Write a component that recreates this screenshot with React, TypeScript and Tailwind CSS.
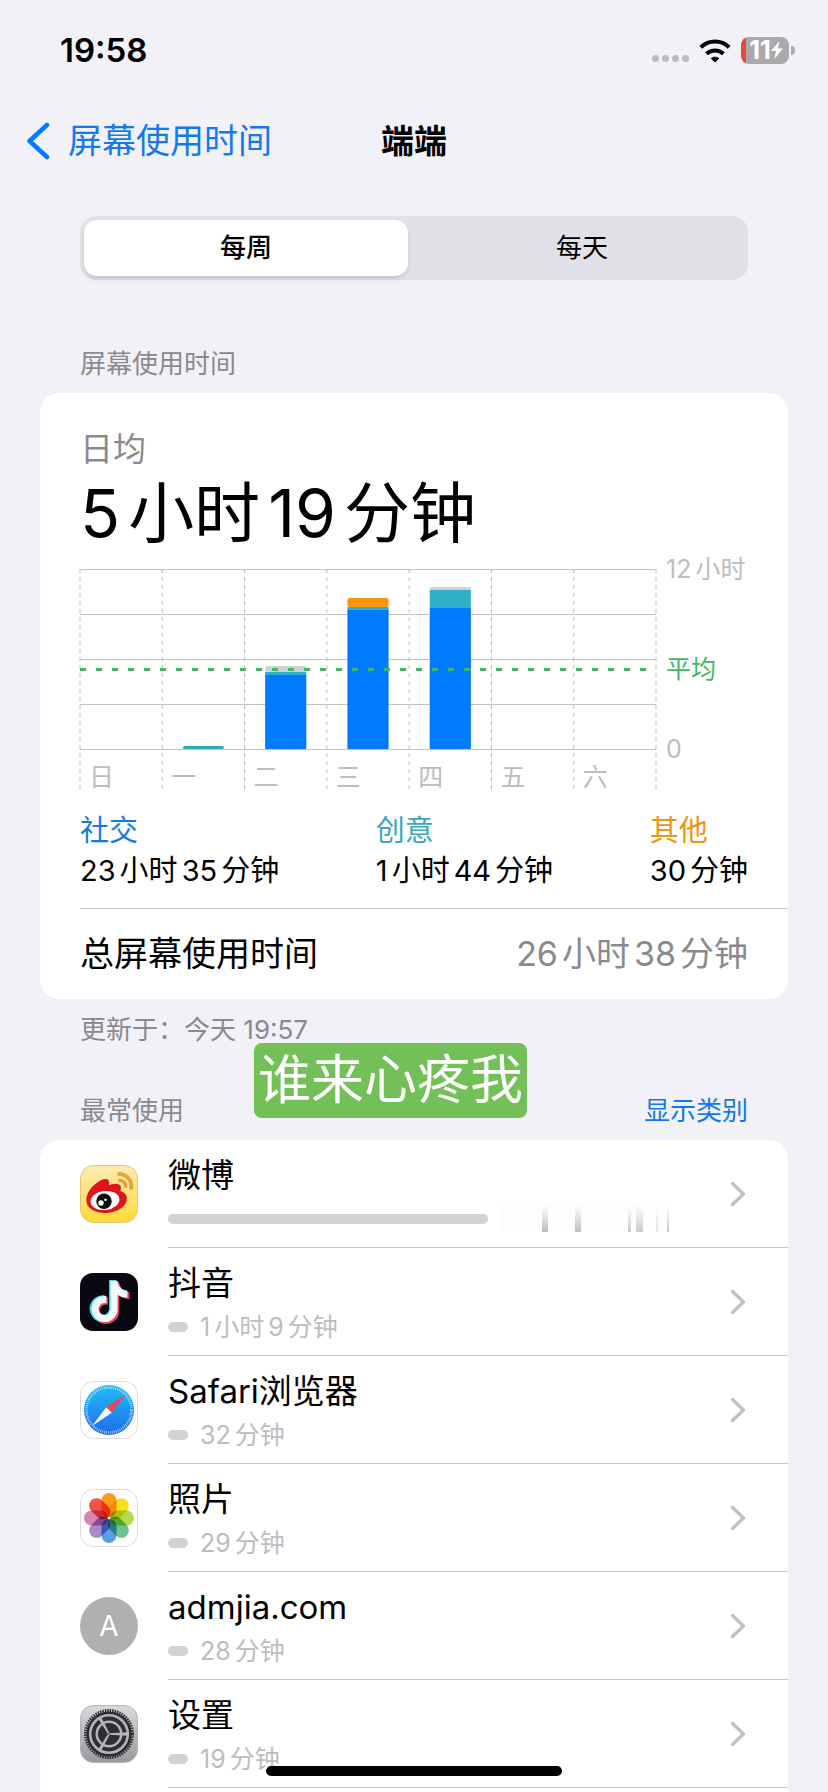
import React, { useState } from 'react'
import { FaTiktok } from 'react-icons/fa'

const days = ['日', '一', '二', '三', '四', '五', '六']

// heights in px on a 180px plot (12 hours), listed from the bottom up
const bars = [
  { day: 1, parts: [{ h: 3, color: '#30a9bb' }] },
  { day: 2, parts: [{ h: 74, color: '#007aff' }, { h: 3, color: '#30b0c7' }, { h: 6, color: '#d1d1d6' }] },
  { day: 3, parts: [{ h: 139, color: '#007aff' }, { h: 3, color: '#30b0c7' }, { h: 9, color: '#ff9500' }] },
  { day: 4, parts: [{ h: 141, color: '#007aff' }, { h: 18, color: '#30b0c7' }, { h: 3, color: '#d1d1d6' }] },
]

const petals = ['#fb9a1c', '#f7e01c', '#b5d84c', '#6cc496', '#5a9fe0', '#a58bc8', '#d887b5', '#f0524f']

type DurationProps = { hours?: number; minutes: number; gap: string }

const Duration = ({ hours, minutes, gap }: DurationProps) => {
  return (
    <span className={`inline-flex whitespace-nowrap ${gap}`}>
      {hours !== undefined && (
        <>
          <span>{hours}</span>
          <span>小时</span>
        </>
      )}
      <span>{minutes}</span>
      <span>分钟</span>
    </span>
  )
}

const WeiboIcon = () => (
  <svg viewBox="0 0 58 58" className="size-[58px]">
    <defs>
      <linearGradient id="weibo" x1="0" y1="0" x2="0" y2="1">
        <stop offset="0" stopColor="#fdebb4" />
        <stop offset="1" stopColor="#ffd83a" />
      </linearGradient>
    </defs>
    <rect x=".5" y=".5" width="57" height="57" rx="13" fill="url(#weibo)" stroke="#e0c878" />
    <path
      d="M6.5 37C5.500 30 10 23 16 18.500C20 15.500 24.500 13 27.500 14.500C29.500 15.500 29.500 18 28.800 20.300C32 18.800 37 17.600 39.800 20C41.500 21.600 41 24 40.200 26C44 27 47 29.500 46.800 34C46.500 42 36 48 25 48C16 48 7.500 44 6.500 37Z"
      fill="#e0131b"
    />
    <ellipse cx="25" cy="35.500" rx="14.500" ry="9.500" fill="#fff" transform="rotate(-7 25 35.500)" />
    <circle cx="24" cy="36.300" r="7.700" fill="#0a0a0a" />
    <circle cx="21" cy="38" r="2.700" fill="#fff" />
    <circle cx="25.500" cy="34.800" r="1.300" fill="#fff" />
    <path d="M37.500 9C46.500 8.500 53 15.500 51 24.500" fill="none" stroke="#e2a63a" strokeWidth="3.800" />
    <path d="M38.300 15.500C43 15 46.500 18 45.300 23" fill="none" stroke="#e2a63a" strokeWidth="3.400" />
  </svg>
)

const DouyinIcon = () => (
  <svg viewBox="0 0 58 58" className="size-[58px]">
    <rect width="58" height="58" rx="13" fill="#0a0913" />
    <FaTiktok x={10} y={9} size={42} color="#e8455f" />
    <FaTiktok x={7} y={7} size={42} color="#3fe3e0" />
    <FaTiktok x={9} y={8} size={41} color="#f4f6fb" />
  </svg>
)

const SafariIcon = () => (
  <svg viewBox="0 0 58 58" className="size-[58px]">
    <defs>
      <linearGradient id="safari" x1="0" y1="0" x2="0" y2="1">
        <stop offset="0" stopColor="#22bdf7" />
        <stop offset="1" stopColor="#1d6bea" />
      </linearGradient>
    </defs>
    <rect x=".5" y=".5" width="57" height="57" rx="13" fill="#fff" stroke="#dcdcdc" />
    <circle cx="29" cy="29" r="25" fill="url(#safari)" />
    <circle cx="29" cy="29" r="22.500" fill="none" stroke="#fff" strokeOpacity=".8" strokeWidth="2.600" strokeDasharray=".7 1.263" />
    <path d="M45.500 13.500L26.200 26.200L31.800 31.800Z" fill="#e5484d" />
    <path d="M12 45L26.200 26.200L31.800 31.800Z" fill="#f7f9fc" />
  </svg>
)

const PhotosIcon = () => (
  <svg viewBox="0 0 58 58" className="size-[58px] isolate">
    <rect x=".5" y=".5" width="57" height="57" rx="13" fill="#fff" stroke="#dcdcdc" />
    {petals.map((color, i) => (
      <rect
        key={color}
        x="21.500"
        y="4"
        width="15"
        height="24"
        rx="7.500"
        fill={color}
        transform={`rotate(${i * 45} 29 29)`}
        className="mix-blend-multiply"
      />
    ))}
  </svg>
)

const SettingsIcon = () => (
  <svg viewBox="0 0 58 58" className="size-[58px]">
    <defs>
      <linearGradient id="settings" x1="0" y1="0" x2="0" y2="1">
        <stop offset="0" stopColor="#d9d9de" />
        <stop offset="1" stopColor="#98989d" />
      </linearGradient>
    </defs>
    <rect x=".5" y=".5" width="57" height="57" rx="13" fill="url(#settings)" stroke="#b4b4b8" />
    <circle cx="29" cy="29" r="23.500" fill="none" stroke="#2c2c30" strokeWidth="3" strokeDasharray="1.500 .96" />
    <circle cx="29" cy="29" r="21.300" fill="#b4b4b9" stroke="#2c2c30" strokeWidth="2.400" />
    <circle cx="29" cy="29" r="15.500" fill="none" stroke="#2f2f33" strokeWidth="4" />
    <circle cx="29" cy="29" r="11" fill="#2f2f33" />
    {[0, 120, 240].map((deg) => (
      <path key={deg} d="M29 28.200L47.500 27.300V30.700L29 29.800Z" fill="#b4b4b9" transform={`rotate(${deg} 29 29)`} />
    ))}
    <circle cx="29" cy="29" r="1.600" fill="#77777c" />
  </svg>
)

const LetterIcon = () => (
  <span className="flex size-[58px] items-center justify-center rounded-full bg-[#b0b0b0] text-[28px] leading-none text-white">
    A
  </span>
)

// smeared-out usage value next to the first bar
const Smudge = () => (
  <svg viewBox="0 0 170 26" className="h-[26px] w-[170px]" aria-hidden="true">
    <defs>
      <linearGradient id="smudge" x1="0" y1="0" x2="0" y2="1">
        <stop offset="0" stopColor="#c4c4c6" stopOpacity="0" />
        <stop offset="1" stopColor="#bdbdbf" />
      </linearGradient>
    </defs>
    <rect width="170" height="26" fill="#fdfdfd" />
    <rect x="42" width="6" height="26" fill="url(#smudge)" />
    <rect x="75" width="6" height="26" fill="url(#smudge)" />
    <rect x="128" width="3" height="26" fill="url(#smudge)" opacity=".8" />
    <rect x="136" width="7" height="26" fill="url(#smudge)" opacity=".8" />
    <rect x="156" width="2" height="26" fill="url(#smudge)" opacity=".4" />
    <rect x="167" width="2" height="26" fill="url(#smudge)" opacity=".8" />
  </svg>
)

const apps = [
  { name: '微博', icon: <WeiboIcon /> },
  { name: '抖音', icon: <DouyinIcon />, hours: 1, minutes: 9 },
  { name: 'Safari浏览器', icon: <SafariIcon />, minutes: 32 },
  { name: '照片', icon: <PhotosIcon />, minutes: 29 },
  { name: 'admjia.com', icon: <LetterIcon />, minutes: 28 },
  { name: '设置', icon: <SettingsIcon />, minutes: 19 },
]

const StatusBar = () => {
  return (
    <div className="flex h-[100px] items-center justify-between pr-[33px] pl-[60px]">
      <span className="text-[33px] leading-10 font-semibold">19:58</span>
      <div className="flex items-center gap-[10px]">
        <div className="mt-4 flex gap-[3px]">
          {[0, 1, 2, 3].map((i) => (
            <span key={i} className="size-[7px] rounded-full bg-[#bcbcc0]" />
          ))}
        </div>
        <svg viewBox="0 0 32 25" className="h-[25px] w-8">
          <path d="M16 24.500L11.700 20.200C14 18.100 18 18.100 20.300 20.200Z" />
          <path d="M7.500 15.700C12.300 11.300 19.700 11.300 24.500 15.700" fill="none" stroke="#000" strokeWidth="4" />
          <path d="M1.800 9.300C9.800 1.500 22.200 1.500 30.200 9.300" fill="none" stroke="#000" strokeWidth="4" />
        </svg>
        <div className="flex items-center gap-[2px]">
          <div className="flex h-[27px] w-12 items-center justify-center rounded-lg bg-linear-to-r from-[#e5483f] from-11% to-[#a9a9ae] to-11% text-[25px] leading-[27px] font-bold text-white">
            <span className="pl-[2px]">11</span>
            <svg viewBox="0 0 12 18" className="h-[18px] w-3 fill-white">
              <path d="M8.500 0L0 10H5L3.300 18L12 7.500H6.800Z" />
            </svg>
          </div>
          <span className="h-[9px] w-1 rounded-r-full bg-[#a9a9ae]" />
        </div>
      </div>
    </div>
  )
}

const NavBar = () => {
  return (
    <nav className="grid h-[82px] grid-cols-[1fr_auto_1fr] items-center px-[26px]">
      <a href="#back" className="flex items-center gap-[18px] text-[34px] leading-10 text-[#1479f0]">
        <svg viewBox="0 0 24 38" className="h-[38px] w-6" fill="none" stroke="#007aff" strokeWidth="4.500" strokeLinecap="round" strokeLinejoin="round">
          <path d="M21 3L3.500 19L21 35" />
        </svg>
        屏幕使用时间
      </a>
      <h1 className="text-[33px] leading-10 font-semibold">端端</h1>
    </nav>
  )
}

const Segmented = () => {
  const [active, setActive] = useState('每周')

  return (
    <div className="mx-20 mt-[34px] flex h-16 gap-3 rounded-2xl bg-[#e2e1e7] p-1">
      {['每周', '每天'].map((label) => (
        <button
          key={label}
          type="button"
          aria-pressed={active === label}
          onClick={() => setActive(label)}
          className={
            active === label
              ? 'flex-1 rounded-[13px] bg-white text-[26px] leading-9 font-medium shadow-md'
              : 'flex-1 rounded-[13px] text-[26px] leading-9'
          }
        >
          {label}
        </button>
      ))}
    </div>
  )
}

const Chart = () => {
  return (
    <div className="flex">
      <svg className="h-[222px] flex-1 overflow-visible">
        {[0, 45, 90, 135, 180].map((y) => (
          <line key={y} x1="0" x2="100%" y1={y + 0.5} y2={y + 0.5} stroke="#c4c4c6" />
        ))}
        {[0, 1, 2, 3, 4, 5, 6, 7].map((i) => (
          <line
            key={i}
            x1={`${(i * 100) / 7}%`}
            x2={`${(i * 100) / 7}%`}
            y1="0"
            y2="222"
            stroke="#b9b9bc"
            strokeDasharray="4 4"
          />
        ))}
        {bars.map((bar) => {
          let y = 180
          return bar.parts.map((part, i) => {
            y -= part.h
            const last = i === bar.parts.length - 1
            return (
              <rect
                key={`${bar.day}-${i}`}
                x={`${((bar.day + 0.25) * 100) / 7}%`}
                y={y}
                width={`${50 / 7}%`}
                height={part.h}
                rx={last ? 2 : 0}
                fill={part.color}
              />
            )
          })
        })}
        <line x1="0" x2="100%" y1="100.500" y2="100.500" stroke="#3fb868" strokeWidth="3" strokeDasharray="6 10" />
        {days.map((day, i) => (
          <text key={day} x={`${(i * 100) / 7}%`} y="217" dx="9" fontSize="25" fill="#bdbdc0">
            {day}
          </text>
        ))}
      </svg>
      <div className="-mt-[18px] flex w-[92px] flex-col pl-[10px] text-[25px] leading-9 text-[#bdbdc0]">
        <span className="flex gap-1">
          <span>12</span>
          <span>小时</span>
        </span>
        <span className="mt-16 text-[#3fb868]">平均</span>
        <span className="mt-11">0</span>
      </div>
    </div>
  )
}

const Summary = () => {
  return (
    <section className="mx-10 rounded-[20px] bg-white">
      <div className="px-10 pt-9">
        <p className="text-[33px] leading-10 text-[#8a8a8e]">日均</p>
        <p className="mt-1 mb-4 text-[66px] leading-20">
          <Duration hours={5} minutes={19} gap="gap-2" />
        </p>
        <Chart />
      </div>
      <div className="ml-10 border-b border-[#c6c6c8] pt-5 pr-10 pb-[17px]">
        <div className="flex justify-between text-[29px] leading-10">
          <div>
            <p className="text-[#1479e8]">社交</p>
            <Duration hours={23} minutes={35} gap="gap-1" />
          </div>
          <div>
            <p className="text-[#3aa9b8]">创意</p>
            <Duration hours={1} minutes={44} gap="gap-1" />
          </div>
          <div>
            <p className="text-[#ee9412]">其他</p>
            <Duration minutes={30} gap="gap-1" />
          </div>
        </div>
      </div>
      <div className="flex h-[90px] items-center justify-between px-10 text-[34px] leading-10">
        <span>总屏幕使用时间</span>
        <span className="text-[#8a8a8e]">
          <Duration hours={26} minutes={38} gap="gap-1" />
        </span>
      </div>
    </section>
  )
}

const AppList = () => {
  return (
    <ul className="mx-10 flex-1 rounded-t-[20px] bg-white">
      {apps.map((app) => (
        <li key={app.name}>
          <a href="#app" className="flex h-[108px] pl-10">
            <span className="mr-[30px] self-center">{app.icon}</span>
            <span className="flex flex-1 border-b border-[#c6c6c8] pr-[42px]">
              <span className="flex-1">
                <span className="mt-[15px] block text-[33px] leading-10">{app.name}</span>
                <span className="mt-[6px] flex h-9 items-center text-[25px] leading-9 text-[#bdbdc0]">
                  {app.minutes === undefined ? (
                    <>
                      <span className="mr-3 h-[10px] w-80 rounded-full bg-[#d1d1d6]" />
                      <Smudge />
                    </>
                  ) : (
                    <>
                      <span className="mr-3 h-[10px] w-5 rounded-full bg-[#d1d1d6]" />
                      <Duration hours={app.hours} minutes={app.minutes} gap="gap-1" />
                    </>
                  )}
                </span>
              </span>
              <svg viewBox="0 0 16 26" className="h-[26px] w-4 self-center" fill="none" stroke="#c2c2c5" strokeWidth="3.500" strokeLinecap="round" strokeLinejoin="round">
                <path d="M2.500 2.500L13.500 13L2.500 23.500" />
              </svg>
            </span>
          </a>
        </li>
      ))}
    </ul>
  )
}

const App = () => {
  return (
    <div className="flex min-h-screen flex-col bg-[#f2f1f8] font-['Inter','Noto_Sans_CJK_SC',sans-serif] text-black">
      <StatusBar />
      <NavBar />
      <Segmented />
      <h2 className="mt-[66px] mb-[11px] px-20 text-[26px] leading-9 text-[#8a8a8e]">屏幕使用时间</h2>
      <Summary />
      <div className="relative px-20 pt-[13px] pb-[11px] text-[26px] leading-9 text-[#8a8a8e]">
        <p>更新于：今天 19:57</p>
        <div className="mt-[45px] flex justify-between">
          <h2>最常使用</h2>
          <button type="button" className="text-[#1479e8]">显示类别</button>
        </div>
        <div className="absolute top-11 left-[254px] rounded-lg bg-[#72c057] px-1 text-[53px] leading-[75px] text-white">
          谁来心疼我
        </div>
      </div>
      <AppList />
      <div className="fixed bottom-4 left-1/2 h-[10px] w-[296px] -translate-x-1/2 rounded-full bg-black" />
    </div>
  )
}

export default App
